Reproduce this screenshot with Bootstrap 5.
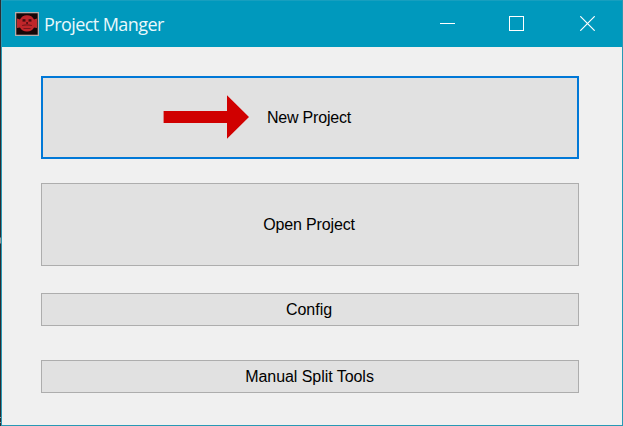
<!DOCTYPE html>
<html lang="en">
<head>
<meta charset="utf-8">
<title>Project Manger</title>
<link rel="stylesheet" href="https://cdn.jsdelivr.net/npm/bootstrap@5.3.0/dist/css/bootstrap.min.css">
<style>
body { background: #2b2d33; }
.edge-strip { width: 1px; background: linear-gradient(#2b2d33 0 237px, #999 238px 243px, #2b2d33 244px 417px, #999 417px 418px, #2b2d33 418px 422px, #999 422px 423px, #2b2d33 423px); }
.app-window { background: #f0f0f0; border: 1px solid #2899b5; border-top: 0; }
.title-bar { height: 47px; background: #0099bd; border-top: 1px solid #179fbf; padding: 0 27px 1px 13px; }
.title-text { font: 18px/24px "Open Sans", "Noto Sans", sans-serif; letter-spacing: -.58px; color: #e9f8fc; margin-left: 5px; }
.window-controls { gap: 54px; }
.window-controls svg, .title-bar svg { display: block; }
.close-glyph { margin-left: 2px; }
.actions { padding: 29px 43px 0 39px; }
.action { background: #e1e1e1; border: 1px solid #adadad; border-radius: 0; padding: 0 2px 0 0; color: #000; font: 16px/20px "Liberation Sans", Arial, sans-serif; }
.action:hover { background: #e5f1fb; border-color: #0078d7; color: #000; }
.action.large { height: 83px; }
.action.slim { height: 33px; }
.action.focused { border: 2px solid #0078d7; }
.gap-large { margin-top: 24px; }
.gap-config { margin-top: 27px; }
.gap-tools { margin-top: 34px; }
.pointer { left: 120px; top: 17px; }
.label-new { letter-spacing: -.2px; }
.label-open { letter-spacing: -.15px; }
.label-tools { letter-spacing: -.05px; padding-left: 1px; }
</style>
<script src="https://cdn.jsdelivr.net/npm/bootstrap@5.3.0/dist/js/bootstrap.bundle.min.js"></script>
</head>
<body class="vh-100 overflow-hidden d-flex">
<div class="edge-strip flex-shrink-0"></div>
<main class="app-window flex-grow-1 d-flex flex-column">
  <header class="title-bar d-flex align-items-center">
    <svg width="24" height="24" viewBox="0 0 24 24" aria-hidden="true">
      <defs><filter id="soft"><feGaussianBlur stdDeviation=".6"/></filter></defs>
      <rect width="24" height="24" fill="#b5aaa9"/>
      <rect x="1.3" y="1.3" width="21.4" height="21.4" fill="#160708"/>
      <g filter="url(#soft)">
        <path d="M2 6.5 L5 7.5 Q7 3.2 12 3.2 Q17 3.2 19 7.5 L22 6.5 V16 L19 15.5 Q17 19.5 12 19.5 Q7 19.5 5 15.5 L2 16Z" fill="#c0282c"/>
        <g fill="#4a0d10"><rect x="7.5" y="7.2" width="3" height="2.4"/><rect x="13.5" y="7.2" width="3" height="2.4"/><rect x="11.3" y="10" width="1.5" height="2"/></g>
        <path d="M7 13.5 Q12 12.2 17 13.5 M8.5 16.5H15.5" stroke="#7a171b" stroke-width="1.2" fill="none"/>
      </g>
    </svg>
    <span class="title-text text-nowrap">Project Manger</span>
    <div class="window-controls d-flex ms-auto">
      <svg width="15" height="15" viewBox="0 0 15 15"><path d="M0 7.5H15" stroke="#fff"/></svg>
      <svg width="15" height="15" viewBox="0 0 15 15"><rect x=".5" y=".5" width="14" height="14" stroke="#fff" fill="none"/></svg>
      <svg class="close-glyph" width="15" height="15" viewBox="0 0 15 15"><path d="M.3 .3L14.7 14.7M14.7 .3L.3 14.7" stroke="#fff" stroke-width="1.2"/></svg>
    </div>
  </header>
  <div class="actions d-flex flex-column">
    <button class="btn action large focused position-relative" type="button">
      <svg class="pointer position-absolute" width="88" height="46" viewBox="0 0 88 46" aria-hidden="true"><path d="M.6 16H64V.3L86 22L64 43.8V28H.6Z" fill="#d00000"/></svg>
      <span class="label-new">New Project</span>
    </button>
    <button class="btn action large gap-large" type="button"><span class="label-open">Open Project</span></button>
    <button class="btn action slim gap-config" type="button">Config</button>
    <button class="btn action slim gap-tools" type="button"><span class="label-tools">Manual Split Tools</span></button>
  </div>
</main>
</body>
</html>
